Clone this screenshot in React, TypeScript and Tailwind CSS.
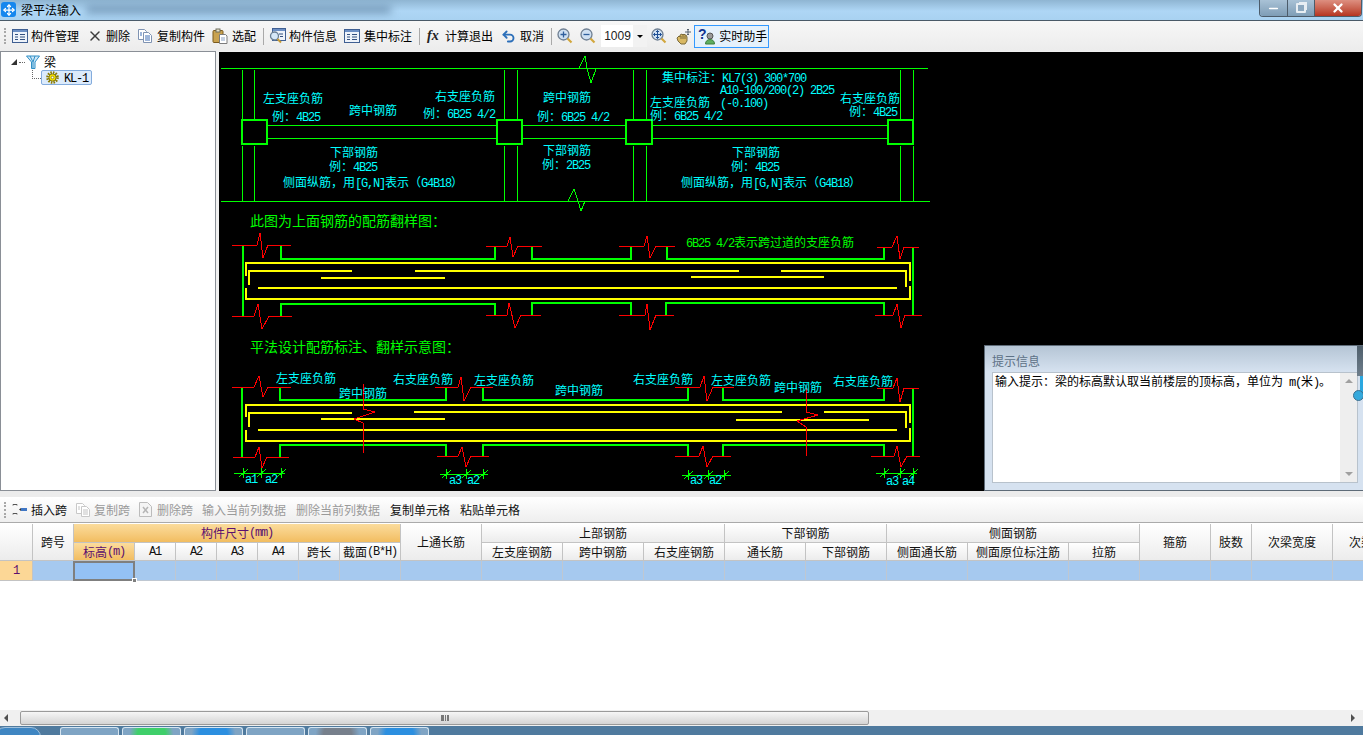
import { Fragment } from "react";
import type { ReactNode } from "react";
import { Minus, Move, Undo2, X } from "lucide-react";

const LATIN = "font-['Liberation_Mono',monospace] text-[12px] tracking-[-1.2px]";

// SimSun latin is half the CJK width, so ascii runs get their own font setting
function splitRuns(s: string) {
  return s.split(/([\x20-\x7e]+)/).filter(Boolean);
}

function Mixed({ text }: { text: string }) {
  return (
    <>
      {splitRuns(text).map((r, i) =>
        /^[\x20-\x7e]/.test(r) ? (
          <span key={i} className={`${LATIN} whitespace-pre`}>
            {r}
          </span>
        ) : (
          <Fragment key={i}>{r}</Fragment>
        ),
      )}
    </>
  );
}

function Label({ x, y, text, fill = "#00ffff", size = "text-[12px]" }: { x: number; y: number; text: string; fill?: string; size?: string }) {
  return (
    <text x={x} y={y} fill={fill} className={`${size} whitespace-pre`}>
      {splitRuns(text).map((r, i) =>
        /^[\x20-\x7e]/.test(r) ? (
          <tspan key={i} className={LATIN}>
            {r}
          </tspan>
        ) : (
          <tspan key={i}>{r}</tspan>
        ),
      )}
    </text>
  );
}

const CYAN_TEXT: [number, number, string][] = [
  [263, 103, "左支座负筋"],
  [272, 121, "例：4B25"],
  [349, 115, "跨中钢筋"],
  [435, 101, "右支座负筋"],
  [423, 118, "例：6B25 4/2"],
  [543, 102, "跨中钢筋"],
  [537, 121, "例：6B25 4/2"],
  [330, 157, "下部钢筋"],
  [329, 171, "例：4B25"],
  [283, 187, "侧面纵筋，用[G,N]表示（G4B18）"],
  [543, 155, "下部钢筋"],
  [542, 169, "例：2B25"],
  [662, 82, "集中标注：KL7(3) 300*700"],
  [720, 94, "A10-100/200(2) 2B25"],
  [650, 107, "左支座负筋"],
  [720, 107, "(-0.100)"],
  [650, 120, "例：6B25 4/2"],
  [840, 103, "右支座负筋"],
  [849, 116, "例：4B25"],
  [732, 157, "下部钢筋"],
  [731, 171, "例：4B25"],
  [681, 187, "侧面纵筋，用[G,N]表示（G4B18）"],
  [276, 383, "左支座负筋"],
  [339, 398, "跨中钢筋"],
  [393, 384, "右支座负筋"],
  [474, 385, "左支座负筋"],
  [555, 395, "跨中钢筋"],
  [633, 384, "右支座负筋"],
  [711, 385, "左支座负筋"],
  [774, 392, "跨中钢筋"],
  [833, 386, "右支座负筋"],
  [245, 483, "a1"],
  [265, 483, "a2"],
  [449, 484, "a3"],
  [467, 484, "a2"],
  [690, 484, "a3"],
  [709, 484, "a2"],
  [886, 485, "a3"],
  [902, 485, "a4"],
];

// thin green construction lines of the top elevation
const THIN_GREEN = [
  "221,68 928,68",
  "579,68 585,56 587,68 591,83 596,69",
  "221,201 930,201",
  "568,201 574,189 578,201 581,211 585,201",
  "242,70 242,120",
  "242,146 242,201",
  "254,70 254,120",
  "254,146 254,201",
  "504,70 504,120",
  "504,146 504,201",
  "517,70 517,120",
  "517,146 517,201",
  "633,70 633,120",
  "633,146 633,201",
  "646,70 646,120",
  "646,146 646,201",
  "900,70 900,120",
  "900,146 900,201",
  "913,70 913,120",
  "913,146 913,201",
  "267,125 497,125",
  "267,138 497,138",
  "522,125 626,125",
  "522,138 626,138",
  "652,125 888,125",
  "652,138 888,138",
  "234,473 285,473",
  "440,474 488,474",
  "682,475 731,475",
  "876,473 917,473",
];

const TICKS: [number, number][] = [
  [243, 473], [261, 473], [281, 473],
  [446, 474], [466, 474], [483, 474],
  [688, 475], [708, 475], [724, 475],
  [884, 473], [900, 473], [913, 473],
];

const THICK_GREEN = [
  "243,245 243,316",
  "281,246 281,259 495,259 495,246",
  "532,246 532,259 631,259 631,246",
  "667,246 667,259 884,259 884,247",
  "913,247 913,315",
  "281,316 281,304 495,304 495,315",
  "532,315 532,303 631,303 631,315",
  "666,315 666,303 884,303 884,315",
  "242,387 242,457",
  "280,387 280,400 446,400 446,387",
  "483,387 483,400 688,400 688,387",
  "723,387 723,400 884,400 884,388",
  "913,388 913,456",
  "280,457 280,445 446,445 446,456",
  "483,456 483,445 688,445 688,456",
  "723,456 723,445 884,445 884,456",
];

const RED = [
  "232,245 257,245 260,233 263,258 268,245 291,245",
  "486,246 507,246 510,237 513,257 518,246 542,246",
  "619,246 644,246 647,236 650,258 656,246 675,246",
  "877,247 892,247 897,236 900,259 904,247 919,247",
  "232,316 254,316 258,304 262,329 269,316 292,316",
  "486,315 507,315 509,303 515,328 521,315 541,315",
  "619,315 645,315 647,304 650,330 656,315 674,315",
  "875,315 893,315 897,304 901,328 905,315 922,315",
  "232,387 254,387 259,376 263,397 268,387 291,387",
  "435,387 458,387 461,377 464,401 471,387 493,387",
  "675,387 700,387 704,376 707,401 713,387 734,387",
  "877,388 893,388 897,378 900,402 904,388 919,388",
  "233,457 255,457 259,447 262,468 267,457 289,457",
  "437,456 458,456 462,447 466,467 471,456 489,456",
  "675,456 699,456 703,446 707,467 713,456 731,456",
  "871,456 894,456 897,446 901,467 907,456 920,456",
  "363,384 363,409 375,412 354,419 363,423 363,453",
  "806,388 806,412 818,415 797,421 806,427 806,456",
];

const YELLOW = [
  "246,276 246,263 910,263 910,281",
  "249,285 249,271 352,271",
  "415,271 739,271",
  "781,271 906,271 906,287",
  "321,278 445,278",
  "691,277 824,277",
  "258,288 897,288",
  "246,288 246,299 910,299 910,286",
  "246,417 246,405 910,405 910,423",
  "249,427 249,413 352,413",
  "414,412 782,412",
  "824,412 906,412 906,428",
  "321,419 445,419",
  "736,420 869,420",
  "258,430 897,430",
  "246,430 246,441 910,441 910,428",
];

const COLUMN_BOXES: [number, number][] = [
  [242, 25],
  [497, 25],
  [626, 26],
  [888, 25],
];

function Drawing() {
  return (
    <svg width={1144} height={439} viewBox="219 52 1144 439" className="block" fill="none" shapeRendering="crispEdges">
      {THIN_GREEN.map((p) => (
        <polyline key={p} points={p} stroke="#00ff00" />
      ))}
      {COLUMN_BOXES.map(([x, w]) => (
        <rect key={x} x={x} y={120} width={w} height={24} stroke="#00ff00" strokeWidth={2} />
      ))}
      {TICKS.map(([x, y]) => (
        <Fragment key={x}>
          <line x1={x} y1={y - 5} x2={x} y2={y + 5} stroke="#00ff00" />
          <line x1={x - 4} y1={y + 4} x2={x + 5} y2={y - 4} stroke="#00ff00" />
        </Fragment>
      ))}
      {THICK_GREEN.map((p) => (
        <polyline key={p} points={p} stroke="#00ff00" strokeWidth={2} />
      ))}
      {YELLOW.map((p) => (
        <polyline key={p} points={p} stroke="#ffff00" strokeWidth={2} />
      ))}
      {RED.map((p) => (
        <polyline key={p} points={p} stroke="#ff0000" />
      ))}
      {CYAN_TEXT.map(([x, y, t]) => (
        <Label key={`${x}-${y}`} x={x} y={y} text={t} />
      ))}
      <Label x={250} y={226} text="此图为上面钢筋的配筋翻样图：" fill="#00ff00" size="text-[14px]" />
      <Label x={250} y={352} text="平法设计配筋标注、翻样示意图：" fill="#00ff00" size="text-[14px]" />
      <Label x={686} y={247} text="6B25 4/2表示跨过道的支座负筋" fill="#00ff00" />
    </svg>
  );
}

/* toolbar icons */
function FormIcon() {
  return (
    <svg width={16} height={14} viewBox="0 0 16 14" className="shrink-0">
      <rect x={0.5} y={0.5} width={15} height={13} fill="#eef3fa" stroke="#3f5f92" />
      <rect x={1} y={1} width={14} height={2} fill="#6c8fc4" />
      <path d="M3 5.5h3M3 8h3M3 10.5h3M8 5.5h5M8 8h5M8 10.5h5" stroke="#33507f" />
    </svg>
  );
}

function CopyIcon({ muted }: { muted?: boolean }) {
  const line = muted ? "#c2c2c2" : "#3f6fb5";
  return (
    <svg width={16} height={14} viewBox="0 0 16 14" className="shrink-0">
      <path d="M1.5.5h6l2 2v8h-8z" fill="#fff" stroke={muted ? "#c8c8c8" : "#7f93b2"} />
      <path d="M6.5 3.5h5l3 3v7h-8z" fill="#fff" stroke={muted ? "#c8c8c8" : "#7f93b2"} />
      <path d="M8 7h5M8 9h5M8 11h5M3 4h2M3 6h2" stroke={line} />
    </svg>
  );
}

function PasteIcon() {
  return (
    <svg width={16} height={16} viewBox="0 0 16 16" className="shrink-0">
      <rect x={1} y={2.5} width={10} height={12} rx={1} fill="#c9a24f" stroke="#7a5a1e" />
      <rect x={4} y={1} width={4} height={3} fill="#e9e2c8" stroke="#6c6c5c" />
      <path d="M7.5 6.5h6l1.5 1.5v7.500h-7.500z" fill="#fff" stroke="#7c7c7c" />
      <path d="M9 10h4M9 12h4" stroke="#8aa1c4" />
    </svg>
  );
}

function InfoIcon() {
  return (
    <svg width={17} height={16} viewBox="0 0 17 16" className="shrink-0">
      <rect x={3.5} y={0.5} width={13} height={12} fill="#eef3fa" stroke="#3f5f92" />
      <rect x={4} y={1} width={12} height={2} fill="#6c8fc4" />
      <path d="M10 6h4M11 8.500h3" stroke="#33507f" />
      <circle cx={5.500} cy={8} r={4} fill="#d6e8f8" stroke="#6a7f94" strokeWidth={1.300} />
      <path d="M8.500 11l3.500 3.500" stroke="#c79a35" strokeWidth={2} />
    </svg>
  );
}

function Magnifier({ mark }: { mark?: "plus" | "minus" | "move" }) {
  return (
    <svg width={16} height={16} viewBox="0 0 16 16" className="shrink-0">
      <circle cx={6.500} cy={6.500} r={5.500} fill="#cfe0f2" stroke="#6f7f92" strokeWidth={1.300} />
      {mark === "plus" ? <path d="M3.500 6.500h6M6.500 3.500v6" stroke="#2f5f9d" strokeWidth={1.300} /> : null}
      {mark === "minus" ? <path d="M3.500 6.500h6" stroke="#2f5f9d" strokeWidth={1.300} /> : null}
      {mark === "move" ? <path d="M2.500 6.500h8M6.500 2.500v8M5 4l1.500-1.500L8 4M5 9l1.500 1.500L8 9M4 5L2.500 6.500 4 8M9 5l1.500 1.500L9 8" stroke="#1f4f95" fill="none" /> : null}
      <path d="M10.500 10.500l4 4" stroke="#d2a63c" strokeWidth={2.200} />
    </svg>
  );
}

function HandIcon() {
  return (
    <svg width={17} height={17} viewBox="0 0 17 17" className="shrink-0">
      <path d="M2 10l2-2 1 1V7l2-1 1 1 1-1 1 1 1 0 1 2v4l-2 3H6l-3-3z" fill="#d9b862" stroke="#7b6a3a" />
      <path d="M6 8v3M8 7v4M10 7.500V11" stroke="#7b6a3a" />
      <path d="M13 1v6M10 4h6M12 2l1-1 1 1M12 6l1 1 1-1" stroke="#55606e" fill="none" />
    </svg>
  );
}

function HelpIcon() {
  return (
    <svg width={18} height={18} viewBox="0 0 18 18" className="shrink-0 overflow-visible">
      <text x={0} y={12} fill="#11328f" className="font-['Liberation_Sans',sans-serif] text-[14px] font-bold">
        ?
      </text>
      <circle cx={12} cy={9} r={3} fill="#9a9a9a" stroke="#555" />
      <path d="M7.500 17c0-3 2-4.500 4.500-4.500s4.500 1.500 4.500 4.500z" fill="#5fae5f" stroke="#3d7f3d" />
    </svg>
  );
}

function InsertSpanIcon() {
  return (
    <svg width={16} height={14} viewBox="0 0 16 14" className="shrink-0">
      <path d="M1 1.500h4M1 1.500v1M5 1.500v1M1 10.500h4M1 10.500v1M5 10.500v1" stroke="#555" />
      <path d="M7 6.500l2-1.500v3z" fill="#333" />
      <rect x={9} y={5} width={6} height={3} fill="#3f76c4" />
    </svg>
  );
}

function DeleteSpanIcon() {
  return (
    <svg width={13} height={15} viewBox="0 0 13 15" className="shrink-0">
      <path d="M.5.500h8l4 4v10H.5z" fill="#f4f4f4" stroke="#bcbcbc" />
      <path d="M4 5l5 6M9 5l-5 6" stroke="#b5b5b5" strokeWidth={1.500} />
    </svg>
  );
}

function Gear() {
  return (
    <svg width={13} height={13} viewBox="0 0 13 13" className="shrink-0">
      <circle cx={6.500} cy={6.500} r={5} fill="none" stroke="#8a7a00" strokeWidth={2.600} strokeDasharray="1.500 1.100" />
      <circle cx={6.500} cy={6.500} r={3.600} fill="#f5e300" stroke="#6d6200" strokeWidth={0.800} />
      <circle cx={6.500} cy={6.500} r={1.300} fill="#fff" stroke="#6d6200" strokeWidth={0.600} />
    </svg>
  );
}

function BeamIcon() {
  return (
    <svg width={14} height={14} viewBox="0 0 14 14" className="shrink-0">
      <path d="M.5 1h13L9 7v6.500H5.500V7z" fill="#cfe7f8" stroke="#2f8fc6" />
      <path d="M4 1l3 6M9 1L7 7M7 7v6" stroke="#2f8fc6" />
    </svg>
  );
}

function Grip() {
  return <div className="h-[16px] w-[2px] shrink-0 border-l-2 border-dotted border-[#a8a8a8]" />;
}

function Sep() {
  return <div className="h-[17px] w-px shrink-0 bg-[#a9a9a9]" />;
}

function Tool({ icon, label, className = "" }: { icon: ReactNode; label: string; className?: string }) {
  return (
    <div className={`flex shrink-0 items-center ${className}`}>
      {icon}
      <span className="whitespace-nowrap">{label}</span>
    </div>
  );
}

function MainToolbar() {
  return (
    <div className="flex h-[30px] shrink-0 items-center gap-[7px] bg-gradient-to-b from-[#f7f7f7] to-[#ececec] pl-[4px] text-[12px] text-black">
      <Grip />
      <Tool icon={<FormIcon />} label="构件管理" className="-ml-[1px] gap-[3px]" />
      <Tool icon={<X size={16} strokeWidth={2.200} className="text-[#3c3c3c]" />} label="删除" className="ml-[1px] gap-[3px]" />
      <Tool icon={<CopyIcon />} label="复制构件" className="gap-[4px]" />
      <Tool icon={<PasteIcon />} label="选配" className="gap-[4px]" />
      <Sep />
      <Tool icon={<InfoIcon />} label="构件信息" className="-ml-[2px] gap-[3px]" />
      <Tool icon={<FormIcon />} label="集中标注" className="gap-[4px]" />
      <Sep />
      <Tool
        icon={
          <span className="w-[15px] font-['Liberation_Serif',serif] text-[14px] leading-none font-bold italic text-[#222]">
            fx
          </span>
        }
        label="计算退出"
        className="gap-[3px]"
      />
      <Tool icon={<Undo2 size={15} strokeWidth={3} className="text-[#2c6fb9]" />} label="取消" className="ml-[1px] gap-[4px]" />
      <Sep />
      <div className="-ml-[2px]">
        <Magnifier mark="plus" />
      </div>
      <Magnifier mark="minus" />
      <div className="-ml-[2px] flex h-[22px] w-[46px] shrink-0 items-center bg-white pl-[3px]">
        <span className="w-[29px] font-['Liberation_Sans',sans-serif] text-[12px] text-[#222]">1009</span>
        <div className="flex h-full flex-1 items-center justify-center bg-[#f2f2f2]">
          <div className="border-x-[3px] border-t-[3px] border-x-transparent border-t-black" />
        </div>
      </div>
      <div className="-ml-[3px] flex items-center gap-[8px]">
        <Magnifier mark="move" />
        <HandIcon />
      </div>
      <div className="-ml-[5px] flex h-[23px] w-[75px] shrink-0 items-center gap-[4px] border border-[#3399ff] bg-[#e5f1fb] pl-[3px]">
        <HelpIcon />
        <span className="-ml-[1px] whitespace-nowrap">实时助手</span>
      </div>
    </div>
  );
}

function TreePanel() {
  return (
    <div className="w-[216px] shrink-0 border border-[#8a8f96] bg-white text-[12px] text-black">
      <div className="flex h-[18px] items-center pt-[2px] pl-[10px]">
        <div className="h-0 w-0 border-b-[6px] border-l-[6px] border-b-[#333] border-l-transparent" />
        <div className="ml-[2px] w-[6px] border-t border-dotted border-[#666]" />
        <div className="ml-[1px] flex items-center gap-[4px]">
          <BeamIcon />
          <span>梁</span>
        </div>
      </div>
      <div className="flex items-start pl-[31px]">
        <div className="h-[9px] w-[9px] border-b border-l border-dotted border-[#666]" />
        <div className="flex h-[15px] w-[51px] items-center rounded-[2px] border border-[#84acdd] bg-[#dcebfc] pl-[4px]">
          <Gear />
          <span className="ml-[5px]">
            <Mixed text="KL-1" />
          </span>
        </div>
      </div>
    </div>
  );
}

function HintPanel() {
  return (
    <div className="absolute right-0 bottom-0 flex h-[146px] w-[379px] flex-col border border-r-0 border-[#5e6b78] bg-[#d6e2f0]">
      <div className="flex h-[26px] shrink-0 items-end bg-gradient-to-b from-[#b5c5d5] to-[#d6e2f0] pb-[2px] pl-[7px] text-[12px] text-[#5d7186]">
        提示信息
      </div>
      <div className="mr-[5px] ml-[7px] flex h-[111px] border border-[#b8c2cc] bg-white">
        <div className="flex-1 pt-[1px] pl-[2px] text-[12px] leading-[14px] whitespace-nowrap text-black">
          <Mixed text="输入提示：梁的标高默认取当前楼层的顶标高，单位为 m(米)。" />
        </div>
        <div className="flex w-[17px] flex-col items-center justify-between bg-[#eeeeee] py-[6px]">
          <div className="border-x-[4px] border-b-[4px] border-x-transparent border-b-[#a0a0a0]" />
          <div className="border-x-[4px] border-t-[4px] border-x-transparent border-t-[#a0a0a0]" />
        </div>
      </div>
      {/* stray slider widget that sits over the right edge */}
      <div className="absolute top-0 right-0 h-[30px] w-[6px] bg-gradient-to-b from-[#4f5f6c] to-[#6e7e8c]" />
      <div className="absolute top-[30px] right-0 h-[18px] w-[3px] bg-[#2aa7e0]" />
      <div className="absolute top-[44px] -right-[1px] h-[11px] w-[11px] rounded-full border border-[#3b6f8f] bg-[#35a9dc]" />
    </div>
  );
}

const H_BASE = "flex items-center justify-center overflow-hidden border-r border-b border-[#c3c3c3] whitespace-nowrap text-[12px]";
const H_GRAY = `${H_BASE} bg-gradient-to-b from-white to-[#ececec] text-[#111]`;
const H_ORANGE = `${H_BASE} bg-gradient-to-b from-[#fbdc9c] to-[#f2bd60] text-[#5b0f6e]`;

type HeadCell = { text?: string; span?: string; orange?: boolean };

const HEADERS: HeadCell[] = [
  { span: "row-span-2" },
  { text: "跨号", span: "row-span-2" },
  { text: "构件尺寸(mm)", span: "col-span-7", orange: true },
  { text: "上通长筋", span: "row-span-2" },
  { text: "上部钢筋", span: "col-span-3" },
  { text: "下部钢筋", span: "col-span-2" },
  { text: "侧面钢筋", span: "col-span-3" },
  { text: "箍筋", span: "row-span-2" },
  { text: "肢数", span: "row-span-2" },
  { text: "次梁宽度", span: "row-span-2" },
  { text: "次梁高度", span: "row-span-2" },
  { text: "标高(m)", orange: true },
  { text: "A1" },
  { text: "A2" },
  { text: "A3" },
  { text: "A4" },
  { text: "跨长" },
  { text: "截面(B*H)" },
  { text: "左支座钢筋" },
  { text: "跨中钢筋" },
  { text: "右支座钢筋" },
  { text: "通长筋" },
  { text: "下部钢筋" },
  { text: "侧面通长筋" },
  { text: "侧面原位标注筋" },
  { text: "拉筋" },
];

const COLUMN_COUNT = 22;

function SpanTable() {
  return (
    <div className="flex-1 overflow-hidden border-t border-[#aaaaaa] bg-white pt-[1px]">
      <div className="grid w-[1414px] grid-cols-[33px_41px_61px_41px_41px_41px_41px_41px_61px_81px_81px_81px_81px_81px_81px_81px_101px_71px_71px_41px_81px_81px] grid-rows-[19px_18px_20px]">
        {HEADERS.map((h, i) => (
          <div key={i} className={`${h.orange ? H_ORANGE : H_GRAY} ${h.span ?? ""}`}>
            {h.text ? <Mixed text={h.text} /> : null}
          </div>
        ))}
        {Array.from({ length: COLUMN_COUNT }).map((_, i) => {
          if (i === 0) {
            return (
              <div key={i} className="flex items-center justify-center border-r border-b border-[#c3c3c3] bg-[#fcd796] text-[12px] text-[#5b0f6e]">
                <Mixed text="1" />
              </div>
            );
          }
          if (i === 2) {
            return (
              <div key={i} className="relative -ml-px border-[2px] border-[#7f7f7f] bg-[#94c1f5]">
                <div className="absolute -right-[4px] -bottom-[4px] h-[5px] w-[5px] border border-white bg-[#7f7f7f]" />
              </div>
            );
          }
          return <div key={i} className="border-r border-b border-[#bfc7d1] bg-[#a6c9ef]" />;
        })}
      </div>
    </div>
  );
}

function HScrollBar() {
  return (
    <div className="flex h-[16px] shrink-0 items-center bg-[#f0f0f0] px-[4px]">
      <div className="border-y-[4px] border-r-[4px] border-y-transparent border-r-[#505050]" />
      <div className="ml-[12px] flex h-[14px] w-[849px] items-center justify-center rounded-[2px] border border-[#9a9a9a] bg-gradient-to-b from-[#f6f6f6] to-[#d4d4d4]">
        <div className="h-[6px] w-[8px] border-x-2 border-[#777] bg-[repeating-linear-gradient(90deg,#777_0,#777_1px,transparent_1px,transparent_2px)]" />
      </div>
      <div className="flex-1" />
      <div className="mr-[4px] border-y-[4px] border-l-[4px] border-y-transparent border-l-[#505050]" />
    </div>
  );
}

const TASK_BUTTONS = [
  "bg-[#7fa4c4]",
  "bg-[radial-gradient(circle_at_50%_100%,#3fcf6a_0,#3fcf6a_14px,#7fa4c4_22px)]",
  "bg-[radial-gradient(circle_at_50%_100%,#2c8fe0_0,#2c8fe0_14px,#7fa4c4_22px)]",
  "bg-[#7fa4c4]",
  "bg-[radial-gradient(circle_at_50%_100%,#77808c_0,#77808c_14px,#7fa4c4_22px)]",
  "bg-[radial-gradient(circle_at_50%_100%,#2c8fe0_0,#2c8fe0_14px,#7fa4c4_22px)]",
];

function Taskbar() {
  return (
    <div className="flex h-[9px] shrink-0 items-stretch gap-[3px] overflow-hidden bg-[#4f7a9e] pt-[1px]">
      <div className="-ml-[5px] h-[20px] w-[46px] rounded-full border border-[#9fc0dc] bg-[#3f86c2]" />
      <div className="w-[13px]" />
      {TASK_BUTTONS.map((c, i) => (
        <div key={i} className={`w-[59px] rounded-t-[3px] border border-b-0 border-[#d5e4f0] ${c}`} />
      ))}
    </div>
  );
}

export default function App() {
  return (
    <div className="flex h-[735px] w-[1363px] flex-col overflow-hidden bg-[#f0f0f0] font-['Noto_Sans_CJK_SC',sans-serif]">
      <div className="flex h-[21px] shrink-0 items-start border-b border-[#4a5a68] bg-[linear-gradient(180deg,#8fb5d2_0%,#aed6f5_55%,#a9d2f1_100%)]">
        <div className="mt-[2px] ml-[1px] flex h-[15px] w-[15px] items-center justify-center rounded-[3px] bg-[#1687ee]">
          <Move size={12} strokeWidth={2.500} className="text-white" />
        </div>
        <span className="mt-[2px] ml-[5px] text-[12px] leading-[16px] text-black">梁平法输入</span>
        <div className="mt-[6px] ml-[5px] h-[7px] w-[305px] bg-[#6f93b2] blur-[4px]" />
        <div className="flex-1" />
        <div className="mr-[1px] flex h-[17px] overflow-hidden rounded-b-[4px] border-x border-b border-[#4c5c6a]">
          <div className="flex w-[28px] items-center justify-center border-r border-[#4c5c6a] bg-gradient-to-b from-[#a9c2d6] to-[#7e9db6]">
            <Minus size={13} strokeWidth={3} className="text-white" />
          </div>
          <div className="flex w-[27px] items-center justify-center border-r border-[#4c5c6a] bg-gradient-to-b from-[#a9c2d6] to-[#7e9db6]">
            <div className="relative h-[10px] w-[10px] rounded-[1px] border-2 border-[#e8eef3] bg-[#8ca8bf] shadow-[2px_-2px_0_-1px_#e8eef3]" />
          </div>
          <div className="flex w-[46px] items-center justify-center bg-gradient-to-b from-[#dd8f80] to-[#b5331f]">
            <X size={14} strokeWidth={4} className="text-white" />
          </div>
        </div>
      </div>
      <MainToolbar />
      <div className="flex h-[440px] shrink-0">
        <TreePanel />
        <div className="w-[3px] shrink-0" />
        <div className="relative mt-px flex-1 bg-black">
          <Drawing />
          <HintPanel />
        </div>
      </div>
      <div className="h-[6px] shrink-0 bg-[#ececec]" />
      <div className="flex h-[25px] shrink-0 items-center gap-[9px] bg-gradient-to-b from-white to-[#eeeeee] pl-[4px] text-[12px] text-[#111]">
        <Grip />
        <div className="-ml-[3px] flex items-center gap-[3px]">
          <InsertSpanIcon />
          <span>插入跨</span>
        </div>
        <div className="-ml-[1px] flex items-center gap-[3px] text-[#9a9a9a]">
          <CopyIcon muted />
          <span>复制跨</span>
        </div>
        <div className="flex items-center gap-[5px] text-[#9a9a9a]">
          <DeleteSpanIcon />
          <span>删除跨</span>
        </div>
        <span className="text-[#9a9a9a]">输入当前列数据</span>
        <span className="ml-[1px] text-[#9a9a9a]">删除当前列数据</span>
        <span className="ml-[1px]">复制单元格</span>
        <span className="ml-[1px]">粘贴单元格</span>
      </div>
      <SpanTable />
      <HScrollBar />
      <Taskbar />
    </div>
  );
}
